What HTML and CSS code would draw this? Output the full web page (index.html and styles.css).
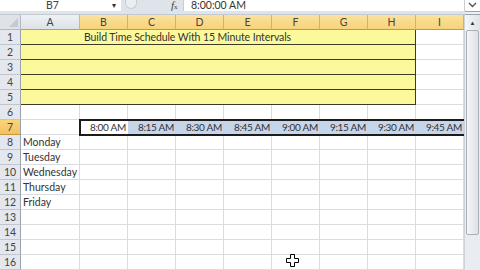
FILE: index.html
```html
<!DOCTYPE html>
<html lang="en">
<head>
    <meta charset="UTF-8">
    <title>Time Schedule</title>
    <link rel="stylesheet" href="styles.css">
</head>
<body>
    <div class="formula-bar">
        <div class="name-box">B7<span class="drop">&#9662;</span></div>
        <div class="buttons"><span class="dim-circle"></span></div>
        <div class="fx"><i>f</i><small>x</small></div>
        <div class="formula">8:00:00 AM</div>
        <div class="expand">
            <svg width="9" height="6" viewBox="0 0 9 6"><path d="M1 1l3.5 3.5L8 1" fill="none" stroke="#555" stroke-width="1.4"/></svg>
        </div>
    </div>

    <div class="workspace">
        <div class="sheet">
            <!-- column headers -->
            <div class="corner"><span class="tri"></span></div>
            <div class="colhead">A</div>
            <div class="colhead sel">B</div>
            <div class="colhead sel">C</div>
            <div class="colhead sel">D</div>
            <div class="colhead sel">E</div>
            <div class="colhead sel">F</div>
            <div class="colhead sel">G</div>
            <div class="colhead sel">H</div>
            <div class="colhead sel">I</div>

            <!-- yellow block -->
            <div class="rowhead">1</div>
            <div class="band title">Build Time Schedule With 15 Minute Intervals</div>
            <div class="cell"></div>
            <div class="rowhead">2</div>
            <div class="band"></div>
            <div class="cell"></div>
            <div class="rowhead">3</div>
            <div class="band"></div>
            <div class="cell"></div>
            <div class="rowhead">4</div>
            <div class="band"></div>
            <div class="cell"></div>
            <div class="rowhead">5</div>
            <div class="band"></div>
            <div class="cell"></div>

            <div class="rowhead">6</div>
            <div class="cell"></div><div class="cell"></div><div class="cell"></div><div class="cell"></div><div class="cell"></div>
            <div class="cell"></div><div class="cell"></div><div class="cell"></div><div class="cell"></div>

            <div class="rowhead sel">7</div>
            <div class="cell"></div>
            <div class="selection">
                <div class="time active">8:00 AM</div>
                <div class="time">8:15 AM</div>
                <div class="time">8:30 AM</div>
                <div class="time">8:45 AM</div>
                <div class="time">9:00 AM</div>
                <div class="time">9:15 AM</div>
                <div class="time">9:30 AM</div>
                <div class="time">9:45 AM</div>
            </div>

            <div class="rowhead">8</div>
            <div class="cell text">Monday</div>
            <div class="cell"></div><div class="cell"></div><div class="cell"></div><div class="cell"></div>
            <div class="cell"></div><div class="cell"></div><div class="cell"></div><div class="cell"></div>

            <div class="rowhead">9</div>
            <div class="cell text">Tuesday</div>
            <div class="cell"></div><div class="cell"></div><div class="cell"></div><div class="cell"></div>
            <div class="cell"></div><div class="cell"></div><div class="cell"></div><div class="cell"></div>

            <div class="rowhead">10</div>
            <div class="cell text">Wednesday</div>
            <div class="cell"></div><div class="cell"></div><div class="cell"></div><div class="cell"></div>
            <div class="cell"></div><div class="cell"></div><div class="cell"></div><div class="cell"></div>

            <div class="rowhead">11</div>
            <div class="cell text">Thursday</div>
            <div class="cell"></div><div class="cell"></div><div class="cell"></div><div class="cell"></div>
            <div class="cell"></div><div class="cell"></div><div class="cell"></div><div class="cell"></div>

            <div class="rowhead">12</div>
            <div class="cell text">Friday</div>
            <div class="cell"></div><div class="cell"></div><div class="cell"></div><div class="cell"></div>
            <div class="cell"></div><div class="cell"></div><div class="cell"></div><div class="cell"></div>

            <div class="rowhead">13</div>
            <div class="cell"></div><div class="cell"></div><div class="cell"></div><div class="cell"></div><div class="cell"></div>
            <div class="cell"></div><div class="cell"></div><div class="cell"></div><div class="cell"></div>

            <div class="rowhead">14</div>
            <div class="cell"></div><div class="cell"></div><div class="cell"></div><div class="cell"></div><div class="cell"></div>
            <div class="cell"></div><div class="cell"></div><div class="cell"></div><div class="cell"></div>

            <div class="rowhead">15</div>
            <div class="cell"></div><div class="cell"></div><div class="cell"></div><div class="cell"></div><div class="cell"></div>
            <div class="cell"></div><div class="cell"></div><div class="cell"></div><div class="cell"></div>

            <div class="rowhead">16</div>
            <div class="cell"></div><div class="cell"></div><div class="cell"></div><div class="cell"></div><div class="cell"></div>
            <div class="cell"></div><div class="cell"></div><div class="cell"></div><div class="cell"></div>

            <!-- mouse pointer over the grid -->
            <svg class="pointer" width="13" height="13" viewBox="0 0 13 13">
                <path d="M4.5 0.5h4v4h4v4h-4v4h-4v-4h-4v-4h4z" fill="#fff" stroke="#000" stroke-width="1"/>
            </svg>
        </div>

        <div class="vscroll">
            <div class="split"></div>
            <div class="arrow-up">&#9650;</div>
            <div class="thumb"></div>
            <div class="track"></div>
        </div>
    </div>
</body>
</html>
```

FILE: styles.css
```css
* {
    box-sizing: border-box;
}
body {
    margin: 0;
    width: 480px;
    height: 270px;
    overflow: hidden;
    font-family: Lato, "Liberation Sans", sans-serif;
    font-size: 10.5px;
    color: #333;
    background: #fff;
}

/* formula bar */
.formula-bar {
    display: flex;
    height: 15px;
    background: #dfe4ea;
    border-bottom: 1px solid #c3c9d1;
    padding-bottom: 3px;
}
.name-box {
    position: relative;
    width: 121px;
    background: #fff;
    text-align: center;
    line-height: 11px;
    color: #444;
    padding-right: 16px;
}
.drop {
    position: absolute;
    right: 5px;
    top: 0;
    font-size: 8px;
    color: #333;
}
.buttons {
    width: 50px;
    padding-left: 4px;
}
.dim-circle {
    display: block;
    width: 12px;
    height: 9px;
    border: 1px solid #c8cdd3;
    border-top: none;
    border-radius: 0 0 6px 6px;
    background: #eceff2;
}
.fx {
    width: 12px;
    line-height: 11px;
    color: #444;
    font-family: "Liberation Serif", serif;
    font-size: 11px;
}
.fx small {
    font-size: 7px;
}
.formula {
    flex: 1;
    background: #fff;
    line-height: 11px;
    padding-left: 7px;
    color: #333;
    border-left: 1px solid #c8cdd3;
}
.expand {
    width: 16px;
    background: #fff;
    display: flex;
    justify-content: center;
    padding-top: 2px;
    border-left: 1px solid #c8cdd3;
}

/* sheet */
.workspace {
    display: flex;
}
.sheet {
    position: relative;
    display: grid;
    grid-template-columns: 21px 59px repeat(8, 48px);
    grid-auto-rows: 15px;
    width: 464px;
}
.corner {
    position: relative;
    background: #dfe3e8;
    border-right: 1px solid #b4bac2;
    border-bottom: 1px solid #b4bac2;
}
.tri {
    position: absolute;
    right: 2px;
    bottom: 2px;
    border-left: 9px solid transparent;
    border-bottom: 9px solid #c5cad1;
}
.colhead {
    background: linear-gradient(#eef1f4, #dde2e8);
    border-right: 1px solid #b4bac2;
    border-bottom: 1px solid #9aa2ac;
    text-align: center;
    line-height: 14px;
    color: #444;
}
.colhead.sel {
    background: linear-gradient(#fbe29c, #f7d27a);
    border-right-color: #d9b25c;
    border-bottom-color: #c29a45;
}
.rowhead {
    background: #e4e8ee;
    border-right: 1px solid #9aa2ac;
    border-bottom: 1px solid #c0c6ce;
    text-align: center;
    line-height: 14px;
    color: #444;
}
.rowhead.sel {
    background: linear-gradient(#f9d47c, #f3c25d);
    border-bottom-color: #c29a45;
}
.cell {
    border-right: 1px solid #dadcdf;
    border-bottom: 1px solid #dadcdf;
    line-height: 14px;
    white-space: nowrap;
}
.cell.text {
    padding-left: 2px;
}
.band {
    grid-column: span 8;
    background: #fcf99c;
    border-right: 1px solid #3c3b25;
    border-bottom: 1px solid #3c3b25;
    line-height: 14px;
}
.band.title {
    padding-left: 63px;
    letter-spacing: -0.1px;
}

/* row 7 selected range */
.selection {
    grid-column: span 8;
    display: flex;
    margin: -1px 0 -1px -1px;
    border: 2px solid #1c1c1c;
    border-right: none;
    background: #c5d5ea;
    position: relative;
    z-index: 1;
}
.time {
    width: 48px;
    flex: none;
    text-align: right;
    padding-right: 2px;
    line-height: 13px;
    font-size: 10px;
    letter-spacing: -0.3px;
}
.time.active {
    width: 47px;
    background: #fff;
}

.pointer {
    position: absolute;
    left: 286px;
    top: 239px;
}

/* vertical scrollbar */
.vscroll {
    width: 16px;
    display: flex;
    flex-direction: column;
    background: #e9ecf0;
    border-left: 1px solid #cfd4da;
}
.split {
    height: 4px;
    margin-top: -4px;
    border-top: 1px solid #9aa2ac;
    border-bottom: 1px solid #9aa2ac;
    background: #eef0f3;
}
.arrow-up {
    height: 15px;
    text-align: center;
    font-size: 6px;
    line-height: 15px;
    color: #333;
    background: linear-gradient(90deg, #f4f6f8, #dfe3e8);
}
.thumb {
    height: 205px;
    margin: 0 1px;
    border: 1px solid #a9b0ba;
    border-radius: 2px;
    background: linear-gradient(90deg, #f3f5f7, #dde1e6);
}
.track {
    flex: 1;
}
```
